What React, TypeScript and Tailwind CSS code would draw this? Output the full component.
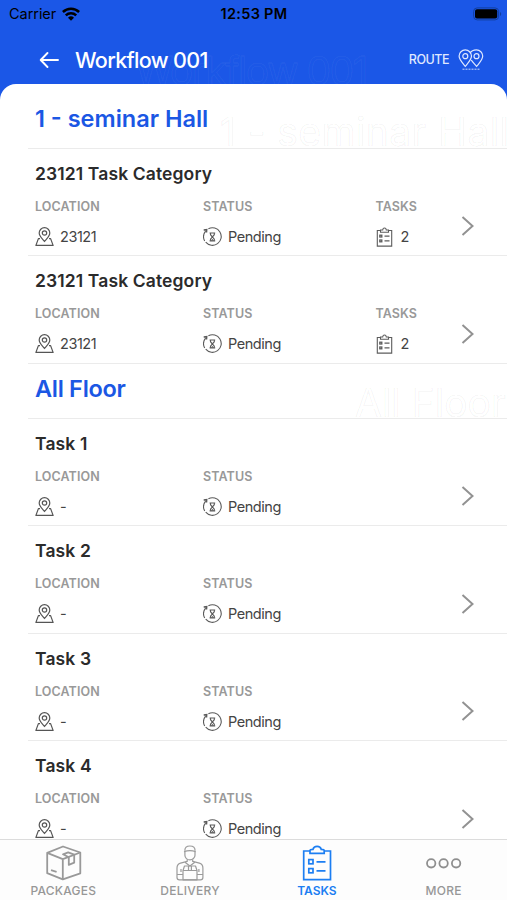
type Task = {
  title: string;
  location: string;
  status: string;
  tasks?: number;
};

type Section = {
  name: string;
  tasks: Task[];
};

const sections: Section[] = [
  {
    name: '1 - seminar Hall',
    tasks: [
      { title: '23121 Task Category', location: '23121', status: 'Pending', tasks: 2 },
      { title: '23121 Task Category', location: '23121', status: 'Pending', tasks: 2 },
    ],
  },
  {
    name: 'All Floor',
    tasks: [
      { title: 'Task 1', location: '-', status: 'Pending' },
      { title: 'Task 2', location: '-', status: 'Pending' },
      { title: 'Task 3', location: '-', status: 'Pending' },
      { title: 'Task 4', location: '-', status: 'Pending' },
    ],
  },
];

function WifiIcon() {
  return (
    <svg width="18" height="14" viewBox="0 0 18 14" fill="none" stroke="#000" strokeWidth="2.5">
      <path d="M.9 5a11.7 11.7 0 0 1 16.2 0" />
      <path d="M3.8 8.3a7.5 7.5 0 0 1 10.4 0" />
      <path d="M9 13.8 6 10.7a4.3 4.3 0 0 1 6 0z" fill="#000" stroke="none" />
    </svg>
  );
}

function BatteryIcon() {
  return (
    <svg width="29" height="14" viewBox="0 0 29 14">
      <rect x="0.6" y="0.9" width="25" height="12" rx="3.6" fill="none" stroke="#123f9f" />
      <rect x="2" y="2.3" width="22.2" height="9.2" rx="2" fill="#000" />
      <path d="M27 5v4c1.6-.6 1.6-3.4 0-4z" fill="#123f9f" />
    </svg>
  );
}

function RouteIcon() {
  return (
    <svg width="26" height="22" viewBox="0 0 26 22" fill="none" stroke="#dfe8ff" strokeWidth="1.2">
      <path d="M7.3 17.4C4.6 14 1.1 10.8 1.1 7.1a6.2 6.2 0 0 1 12.4 0c0 3.7-3.5 6.9-6.2 10.3z" />
      <path d="M12 4.2C13.1 2.2 15.7.9 18.5.9a6.2 6.2 0 0 1 6.2 6.2c0 3.7-3.4 6.9-6.1 10.3-1.7-2.2-4-4.2-5.3-6.4" />
      <circle cx="7.3" cy="7.2" r="2.5" />
      <circle cx="18.5" cy="7.2" r="2.5" />
      <path d="M4.5 20.2h17" strokeDasharray="2 1" strokeWidth="0.9" />
    </svg>
  );
}

function LocationIcon() {
  return (
    <svg width="19" height="20" viewBox="0 0 19 20" fill="none" stroke="#555" strokeWidth="1.2" strokeLinejoin="round">
      <path d="M9.5 14.5C7.5 11.8 4.2 9.3 4.2 6a5.3 5.3 0 0 1 10.6 0c0 3.3-3.3 5.8-5.3 8.5z" />
      <circle cx="9.5" cy="6" r="2.2" />
      <path d="M5 11.6H3.4L.9 18.4h17.2l-2.5-6.8H14" />
    </svg>
  );
}

function PendingIcon() {
  return (
    <svg width="20" height="20" viewBox="0 0 20 20" fill="none" stroke="#5a5a5a" strokeWidth="1.1">
      <path d="M5.4 1.7a8.8 8.8 0 1 1-2.7 13.5" />
      <path d="M1.7 14A8.8 8.8 0 0 1 2.6 4.2" />
      <path d="M.7 3l3-.3-.2 2.8" strokeWidth="1.5" />
      <path d="M6.6 6h5.6M6.6 13.8h5.6" strokeWidth="1.2" />
      <path d="M7.5 6v1.7l3.8 4.4v1.7M11.3 6v1.7l-3.8 4.4v1.7" />
      <path d="M7.8 13.6l1.6-1.6 1.6 1.6z" fill="#555" stroke="none" />
    </svg>
  );
}

function ChecklistIcon() {
  return (
    <svg width="17" height="20" viewBox="0 0 17 20" fill="none" stroke="#5c5c5c" strokeWidth="1.1">
      <path d="M4.5 3.5H1.3v15.6h14.4V3.5h-3.2" />
      <path d="M4.5 5.3V3h2.2c.3-2.6 3.3-2.6 3.6 0h2.2v2.3z" />
      <rect x="3.8" y="8.2" width="2" height="1.8" strokeWidth="1.3" />
      <rect x="3.8" y="13" width="2" height="1.8" strokeWidth="1.3" />
      <path d="M8.5 9.1h5M8.5 13.9h5" />
    </svg>
  );
}

function PackageIcon() {
  return (
    <svg width="36" height="36" viewBox="0 0 36 36" fill="none" stroke="#999" strokeWidth="1.8" strokeLinejoin="round" className="relative left-px">
      <path d="M1.2 7.8 17 1.5l17.3 6v20.8L16.800 34.4 1.2 28.2z" />
      <path d="M1.2 7.8l15.6 6.3 17.5-6.600M16.800 14.1v20.3" />
      <path d="M17 9.3l5.2-1.9 6 2.2v8.1l-5.4 2.1v-7.6L17 9.3z" />
      <path d="M5 25.2l5.6 1.6" />
    </svg>
  );
}

function DeliveryIcon() {
  return (
    <svg width="28" height="36" viewBox="0 0 28 36" fill="none" stroke="#9b9b9b" strokeWidth="1.2" strokeLinejoin="round">
      <path d="M8.8 5.7C8.8 2.8 10.6 1 13.9 1s5.2 1.8 5.2 4.7M8 6.7c3.4-1.2 8.4-1.2 11.8 0" />
      <path d="M8.9 6.7v3.6c0 2.6 2.3 4.6 5 4.6s5.1-2 5.1-4.6V6.7" />
      <path d="M11.2 14.4v2L4.5 18.2C1.7 19 1 20.8 1 23v9.5c0 1.5.9 2.3 2.5 2.3h20.9c1.6 0 2.5-.8 2.5-2.3V23c0-2.2-.7-4-3.5-4.8l-6.7-1.8v-2" />
      <path d="M9 17.3l4.9 3.6 4.9-3.6M5 27v-3M22.9 27v-3" />
      <path d="M7 25.5 8.5 21h11l1.5 4.5v9.3H7zM7 25.5h14M12.5 21v4.5M15.4 21v4.5" />
      <path d="M1 29.5h6M21 29.5h6" />
    </svg>
  );
}

function TasksIcon() {
  return (
    <svg width="30" height="36" viewBox="0 0 30 36" fill="none" stroke="#1c7ef2" strokeWidth="1.7">
      <path d="M8 6H1.7v28.7h26.8V6h-6.3" />
      <path d="M8 8.4V5.5c0-1 1.5-1.2 3-1.2C11.5 2.2 13 1.3 15.1 1.3s3.6.9 4.1 3c1.5 0 3 .2 3 1.2v2.9z" />
      <rect x="6.8" y="14.6" width="4.2" height="4.2" />
      <rect x="6.8" y="23.6" width="4.2" height="4.2" />
      <path d="M14.5 16.9h9M14.5 25.9h9" />
    </svg>
  );
}

function MoreIcon() {
  return (
    <svg width="36" height="36" viewBox="0 0 36 36" fill="none" stroke="#8f8f8f" strokeWidth="1.8">
      <circle cx="5.2" cy="18.3" r="4.2" />
      <circle cx="17.6" cy="18.3" r="4.2" />
      <circle cx="30.1" cy="18.3" r="4.2" />
    </svg>
  );
}

function Header() {
  return (
    <header className="relative h-[84px] shrink-0 overflow-hidden">
      <span className="absolute left-[135px] top-[47px] whitespace-nowrap text-[39px] leading-[48px] tracking-[-1.6px] text-transparent [-webkit-text-stroke:1px_rgba(255,255,255,0.05)]">
        Workflow 001
      </span>
      <div className="grid h-7 grid-cols-3 items-center pl-[9px] pr-[5px] text-black">
        <div className="flex items-center gap-[6px]">
          <span className="text-[14.5px] tracking-[-0.05px]">Carrier</span>
          <WifiIcon />
        </div>
        <span className="-ml-[3px] text-center text-[14.5px] font-semibold tracking-[0.3px]">12:53 PM</span>
        <div className="flex justify-end">
          <BatteryIcon />
        </div>
      </div>
      <div className="flex h-16 items-center pl-[39px] pr-[23px] text-white">
        <svg width="21" height="18" viewBox="0 0 21 18" fill="none" stroke="#fff" strokeWidth="1.9" strokeLinecap="round" strokeLinejoin="round">
          <path d="M19 9H2M8.5 2 1.7 9l6.8 7" />
        </svg>
        <h1 className="ml-[15px] text-[21.5px] font-medium tracking-[-0.65px]">Workflow 001</h1>
        <span className="ml-auto mr-[9px] text-[12.5px] font-medium tracking-[-0.5px] text-[#dfe8ff]">ROUTE</span>
        <RouteIcon />
      </div>
    </header>
  );
}

type FieldProps = {
  label: string;
  icon: React.ReactNode;
  value: string | number;
  className: string;
};

function Field({ label, icon, value, className }: FieldProps) {
  return (
    <div className={className}>
      <div className="h-[18px] text-[12.5px] font-semibold leading-[18px] tracking-[0.1px] text-[#999]">{label}</div>
      <div className="mt-[11px] flex h-5 items-center text-[14.5px] tracking-[-0.45px] text-[#444]">
        <span className="w-[25px]">{icon}</span>
        <span>{value}</span>
      </div>
    </div>
  );
}

function TaskRow({ task }: { task: Task }) {
  return (
    <li className="ml-7 flex h-[107.5px] shrink-0 items-start border-b border-[#ebebeb] pl-[7px]">
      <div className="flex-1">
        <h3 className="mt-[13px] text-[17.5px] font-semibold leading-6 tracking-[0.12px] text-[#2b2b2b]">{task.title}</h3>
        <div className="mt-[12px] flex">
          <Field label="LOCATION" icon={<LocationIcon />} value={task.location} className="w-[168px]" />
          <Field label="STATUS" icon={<PendingIcon />} value={task.status} className="w-[172.5px]" />
          {task.tasks !== undefined && (
            <Field label="TASKS" icon={<ChecklistIcon />} value={task.tasks} className="w-[60px]" />
          )}
        </div>
      </div>
      <svg className="mr-[32px] mt-[66.5px]" width="15" height="22" viewBox="0 0 15 22" fill="none" stroke="#929292" strokeWidth="2">
        <path d="M2.5 2 12.5 11l-10 9" />
      </svg>
    </li>
  );
}

type SectionHeaderProps = {
  name: string;
  className: string;
  titleClassName: string;
  ghostClassName: string;
};

function SectionHeader({ name, className, titleClassName, ghostClassName }: SectionHeaderProps) {
  return (
    <div className={`relative shrink-0 overflow-hidden pl-[35px] ${className}`}>
      <span
        className={`absolute whitespace-nowrap text-[39px] leading-[48px] text-transparent [-webkit-text-stroke:1.2px_rgba(0,0,0,0.045)] ${ghostClassName}`}
      >
        {name}
      </span>
      <h2 className={`relative text-[23.5px] font-semibold leading-[30px] text-[#1b57e4] ${titleClassName}`}>{name}</h2>
      <div className="absolute bottom-0 left-7 right-0 h-px bg-[#ebebeb]" />
    </div>
  );
}

const tabs = [
  { label: 'PACKAGES', icon: <PackageIcon /> },
  { label: 'DELIVERY', icon: <DeliveryIcon /> },
  { label: 'TASKS', icon: <TasksIcon />, active: true },
  { label: 'MORE', icon: <MoreIcon /> },
];

function TabBar() {
  return (
    <nav className="grid h-[61px] shrink-0 grid-cols-4 border-t border-[#dcdcdc] bg-[#fdfdfd]">
      {tabs.map((tab) => (
        <button key={tab.label} className="flex flex-col items-center pt-[5px]">
          {tab.icon}
          <span
            className={
              tab.active
                ? 'mt-[1px] text-[12px] font-semibold leading-[18px] text-[#1c7ef2]'
                : 'mt-[1px] text-[12px] font-medium leading-[18px] tracking-[0.25px] text-[#979797]'
            }
          >
            {tab.label}
          </span>
        </button>
      ))}
    </nav>
  );
}

export default function App() {
  return (
    <div className="flex h-[900px] w-[507px] flex-col overflow-hidden bg-[#1b57e7] font-['Inter',sans-serif]">
      <Header />
      <main className="flex min-h-0 flex-1 flex-col overflow-hidden rounded-t-[16px] bg-white">
        <SectionHeader
          name={sections[0].name}
          className="h-[65px] pt-[20px]"
          titleClassName="tracking-[0px]"
          ghostClassName="left-[220px] top-[24px] tracking-[0.4px]"
        />
        <ul className="-mt-[0.5px] shrink-0">
          {sections[0].tasks.map((task, i) => (
            <TaskRow key={i} task={task} />
          ))}
        </ul>
        <SectionHeader
          name={sections[1].name}
          className="h-[55px] pt-[10px]"
          titleClassName="tracking-[-0.3px]"
          ghostClassName="left-[355px] top-[15px]"
        />
        <ul className="shrink-0">
          {sections[1].tasks.map((task, i) => (
            <TaskRow key={i} task={task} />
          ))}
        </ul>
      </main>
      <TabBar />
    </div>
  );
}
